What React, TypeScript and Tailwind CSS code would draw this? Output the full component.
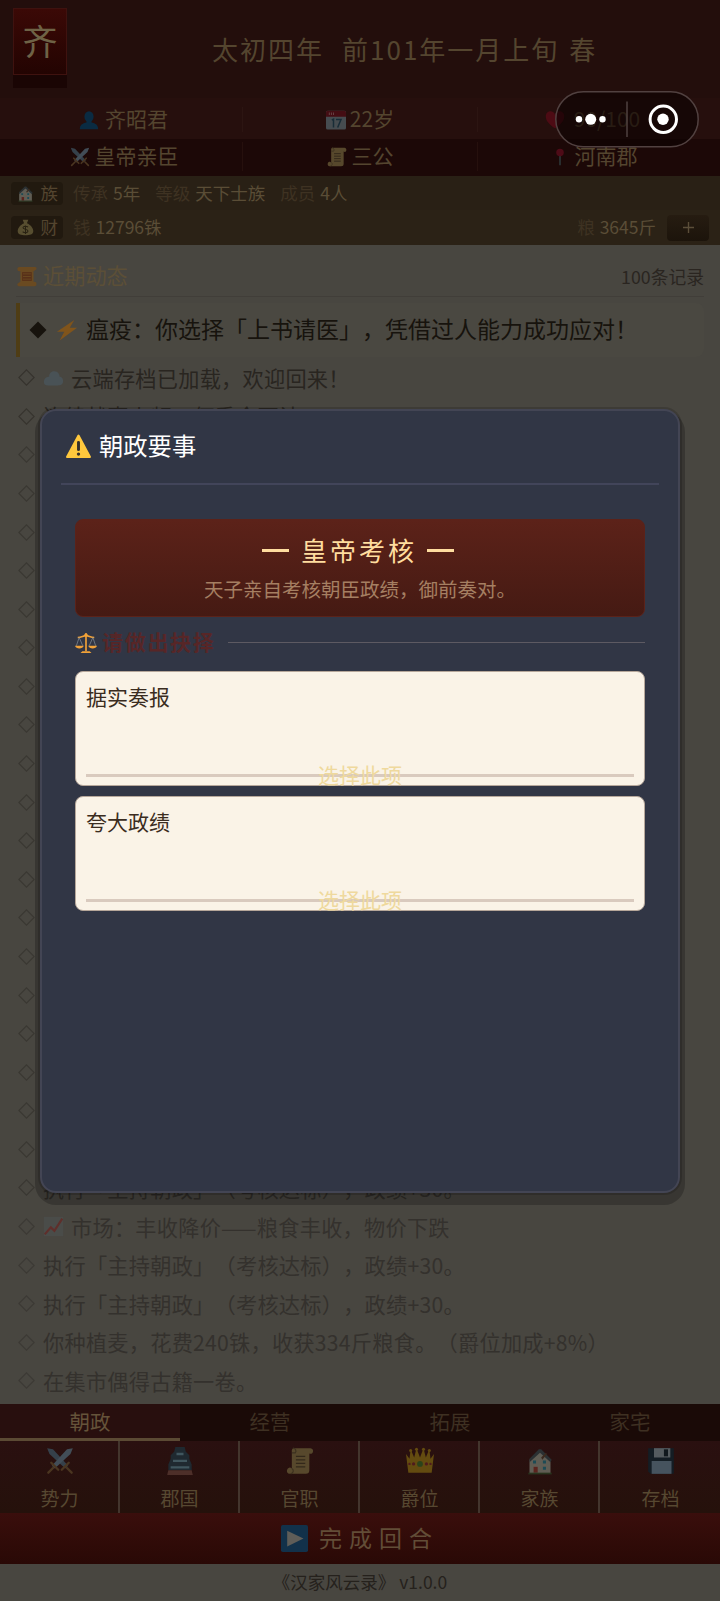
import React from "react";

type IconName =
  | "person" | "calendar" | "heart" | "swords" | "scroll" | "pin" | "house" | "money" | "bolt"
  | "cloud" | "chart" | "warning" | "scales" | "castle" | "crown" | "floppy" | "play" | "oldScroll";

const shapes: Record<IconName, React.ReactNode> = {
  person: (
    <g fill="#0a2b42">
      <ellipse cx="12" cy="8" rx="5.500" ry="6.500" />
      <path d="M1 23c0-5 3-7 8-8v-3h6v3c5 1 8 3 8 8z" />
    </g>
  ),
  calendar: (
    <g>
      <rect x="0" y="1" width="24" height="22.500" rx="2" fill="#464c50" />
      <path d="M0 8V3a2 2 0 0 1 2-2h20a2 2 0 0 1 2 2v5z" fill="#440d13" />
      <path d="M4 3v3M6.500 3v3M9 3v3" stroke="#6b4a4d" strokeWidth="1" />
      <path d="M7 12l2-1v10M12 11.500h6l-4 9.500" fill="none" stroke="#182c37" strokeWidth="1.800" />
    </g>
  ),
  heart: <path d="M12 22C5 17 1 13 1 8a5.500 5.500 0 0 1 11-2 5.500 5.500 0 0 1 11 2c0 5-4 9-11 14z" fill="#4d0b14" />,
  swords: (
    <g>
      <path d="M1 1l5 1 13 14-2.500 2.500L3 6z" fill="#35404a" />
      <path d="M23 1l-5 1L5 16l2.500 2.500L21 6z" fill="#424d57" />
      <path d="M13.500 19.500l6-6M10.500 19.500l-6-6M18 18l4 4M6 18l-4 4" stroke="#4a3520" strokeWidth="2" strokeLinecap="round" />
    </g>
  ),
  scroll: (
    <g>
      <path d="M6 1h15a2.500 2.500 0 0 1 2 3.500 2 2 0 0 1-3 1V20a3 3 0 0 1-3 3H3a2.500 2.500 0 0 1-2-3.500 2.300 2.300 0 0 1 4-1V4a3 3 0 0 1 1-3z" fill="#57482c" />
      <path d="M8.500 8h8M8.500 11h8M8.500 14h8M8.500 17h8" stroke="#33281a" strokeWidth="1.200" />
      <path d="M6 1a2.500 2.500 0 0 1 2 4H5M5 18.500c2 1 1.500 4-1 4.500" stroke="#3d3120" strokeWidth="1" fill="none" />
    </g>
  ),
  oldScroll: (
    <g>
      <path d="M4 1h18a2 2 0 0 1 1 3l-3 2v12h1a2.500 2.500 0 0 1 0 5H3a2 2 0 0 1-1-3l3-2V6H4a2.500 2.500 0 0 1 0-5z" fill="#6a4a21" />
      <path d="M7 7h11v10H7z" fill="#583019" />
      <path d="M8 9h9M8 12h9M8 15h9" stroke="#6a4a21" strokeWidth="1" />
    </g>
  ),
  pin: (
    <g>
      <path d="M12 8v15" stroke="#2b3032" strokeWidth="2.500" />
      <circle cx="12" cy="6" r="5" fill="#4e0b17" />
    </g>
  ),
  house: (
    <g>
      <path d="M3 11l8-8 10 8v12H3z" fill="#605d54" />
      <path d="M3 10L11 2h2l9 9-1 2-9-8-9 8z" fill="#2b3032" />
      <path d="M13 9l4-4 1 1-4 5z" fill="#3c2a1e" />
      <path d="M6.500 17h3.500v5H6.500z" fill="#5b241e" />
      <path d="M6 11.500h2.600v2.600H6zM14.500 11.500h2.600v2.600h-2.600zM14.500 17h2.600v2.600h-2.600z" fill="#1d4b55" />
      <path d="M2 22h20v1.500H2z" fill="#28341e" />
    </g>
  ),
  money: (
    <g>
      <path d="M8 1h8l-2 5c5 2 9 7 9 11 0 5-5 6-11 6S1 22 1 17C1 13 5 8 10 6z" fill="#574e30" />
      <path d="M15.500 11.500c-2-2-7-1.500-7 1s7 1.500 7 4.500-5 3-7.500 1M12 9v12" fill="none" stroke="#282112" strokeWidth="1.500" />
    </g>
  ),
  bolt: <path d="M20 1L1 14h8L4 23.500l19-14h-8z" fill="#80541b" />,
  cloud: <path d="M1 17c0-4 3-6 6-6 0-4 3-7 7-6 3 0 5 3 5 6 3 0 4 3 4 5 0 4-3 5-6 5H6c-3 0-5-1-5-4z" fill="#495256" />,
  chart: (
    <g>
      <rect x="1" y="1" width="22" height="22" fill="#4a4c49" />
      <path d="M2 21l7-8 4 4L22 3" fill="none" stroke="#5f2f2b" strokeWidth="2.500" />
    </g>
  ),
  warning: (
    <g>
      <path d="M12 1.500L23 22H1z" fill="#ffc83d" stroke="#ffc83d" strokeWidth="2" strokeLinejoin="round" />
      <path d="M12 8v7" stroke="#35302a" strokeWidth="2.800" strokeLinecap="round" />
      <circle cx="12" cy="19.300" r="1.600" fill="#35302a" />
    </g>
  ),
  scales: (
    <g fill="none" stroke="#f2a238">
      <path d="M12 2v19M3 6c4 0 6-2 9-2s5 2 9 2" strokeWidth="1.800" />
      <path d="M4.500 6L1.500 15M4.500 6l4 9M19.500 6l-4 9M19.500 6l3 9" strokeWidth=".7" stroke="#8d98a0" />
      <path d="M0 15h9.500c-1 4-8.500 4-9.500 0zM14.500 15H24c-1 4-8.500 4-9.500 0zM8 21h8l2 2H6z" fill="#f2a238" stroke="none" />
      <circle cx="12" cy="3" r="1.300" fill="#f2a238" />
    </g>
  ),
  castle: (
    <g>
      <path d="M8 0h8l1 4 3 3v3l2 5v5H2v-5l2-5V7l3-3z" fill="#1f2930" />
      <path d="M9 5h6v2H9zM6 11h12v1.800H6zM4 16.500h16v2H4z" fill="#40565e" />
      <path d="M2 20h20l1 4H1z" fill="#4d2f29" />
    </g>
  ),
  crown: (
    <g fill="#634b10">
      <path d="M0 6l3 4 1-8 3 7 2-8 3 8 3-8 2 8 3-7 1 8 3-4-2 16H2z" />
      <circle cx="4" cy="3" r="1.300" />
      <circle cx="9" cy="2" r="1.300" />
      <circle cx="15" cy="2" r="1.300" />
      <circle cx="20" cy="3" r="1.300" />
      <circle cx="12" cy="14.500" r="2.500" fill="#2b431a" />
      <circle cx="6.500" cy="14.500" r="1.400" fill="#501a1d" />
      <circle cx="17.500" cy="14.500" r="1.400" fill="#501a1d" />
      <circle cx="3" cy="14.500" r="1" fill="#501a1d" />
      <circle cx="21" cy="14.500" r="1" fill="#501a1d" />
    </g>
  ),
  floppy: (
    <g>
      <path d="M1 1h22v22H3l-2-2z" fill="#141d24" />
      <path d="M6 1h14v8H6z" fill="#555b5f" />
      <path d="M14.500 2h3.500v6h-3.500z" fill="#11181d" />
      <path d="M4 12h17v11H4z" fill="#46535e" />
    </g>
  ),
  play: (
    <g>
      <rect width="24" height="24" rx="1.500" fill="#12314a" />
      <path d="M5.500 5l14.500 7-14.500 7z" fill="#5f5d58" />
    </g>
  ),
};

function Icon({ name, className }: { name: IconName; className: string }) {
  return (
    <svg viewBox="0 0 24 24" className={`shrink-0 ${className}`} aria-hidden="true">
      {shapes[name]}
    </svg>
  );
}

function Stat({ icon, label, className, iconClass = "size-[20px]" }: { icon: IconName; label: string; className: string; iconClass?: string }) {
  return (
    <div className={`flex items-center justify-center text-[21px] ${className}`}>
      <Icon name={icon} className={iconClass} />
      <span className="pb-[2px]">{label}</span>
    </div>
  );
}

function Header() {
  return (
    <header className="h-[245px] shrink-0 text-[#54452f]">
      <div className="flex h-[98px] bg-[#230e0c]">
        <div className="ml-[13px] mt-2 flex h-[67px] w-[54px] items-center justify-center border border-[#3f120f] bg-linear-to-b from-[#3b0906] to-[#230402] pb-[2px] text-[35px] text-[#6e6246] shadow-[0_13px_0_#1a0504]">
          齐
        </div>
        <div className="ml-[145px] flex items-center pb-[2px] text-[26px] tracking-[2px] whitespace-pre">
          太初四年<span className="w-[18px]" />前101年一月上旬<span className="w-[10px]" />春
        </div>
      </div>
      <div className="flex h-[41px] bg-[#260f0d] pt-[9px] pb-[7px]">
        <Stat icon="person" label="齐昭君" className="w-[243px] gap-[6px] border-r border-[#2c1512] pl-[5px]" />
        <Stat icon="calendar" label="22岁" className="w-[235px] gap-[4px] border-r border-[#2c1512]" />
        <Stat icon="heart" label="90/100" className="w-[242px] gap-[9px] pr-[13px]" />
      </div>
      <div className="flex h-[37px] bg-[#1c0807] pt-[3px] pb-[5px]">
        <Stat icon="swords" label="皇帝亲臣" className="w-[243px] gap-[5px] border-r border-[#26100d] pl-[6px]" />
        <Stat icon="scroll" label="三公" className="w-[235px] gap-[5px] border-r border-[#26100d]" />
        <Stat icon="pin" label="河南郡" className="w-[242px] gap-[6px] pr-[10px]" iconClass="size-[18px]" />
      </div>
      <div className="flex h-[34px] items-center bg-[#292015] pl-[11px] text-[17.500px]">
        <Badge icon="house" label="族" />
        <Pair name="传承" value="5年" />
        <Pair name="等级" value="天下士族" />
        <Pair name="成员" value="4人" />
      </div>
      <div className="flex h-[35px] items-center bg-[#2b2216] pr-[11px] pl-[11px] text-[17.500px]">
        <Badge icon="money" label="财" />
        <Pair name="钱" value="12796铢" />
        <span className="flex-1" />
        <Pair name="粮" value="3645斤" />
        <button className="-ml-[4px] flex h-[26px] w-[42px] items-center justify-center rounded bg-linear-to-b from-[#261c11] to-[#1c140b] text-[#5b4e39]">
          <svg viewBox="0 0 12 12" className="size-[11px]"><path d="M6 0v12M0 6h12" stroke="currentColor" strokeWidth="1.500" /></svg>
        </button>
      </div>
    </header>
  );
}

function Badge({ icon, label }: { icon: IconName; label: string }) {
  return (
    <div className="mr-[10px] flex h-[23px] w-[52px] items-center justify-end gap-[7px] rounded bg-[#21190f] pr-[5px]">
      <Icon name={icon} className="size-[17px]" />
      <span>{label}</span>
    </div>
  );
}

function Pair({ name, value }: { name: string; value: string }) {
  return (
    <div className="mr-[15px] flex gap-[5px]">
      <span className="text-[#3e3222]">{name}</span>
      <span className="text-[#5a4d36]">{value}</span>
    </div>
  );
}

type Entry = { text?: string; icon?: IconName; tone: string };

const blanks: Entry[] = Array.from({ length: 19 }, () => ({ tone: "text-[#312e29]" }));

const entries: Entry[] = [
  { text: "云端存档已加载，欢迎回来！", icon: "cloud", tone: "text-[#292520]" },
  { text: "连续战事少频，何季今西计", tone: "text-[#2b2722]" },
  ...blanks,
  { text: "执行「主持朝政」（考核达标），政绩+30。", tone: "text-[#302d29]" },
  { text: "市场：丰收降价——粮食丰收，物价下跌", icon: "chart", tone: "text-[#34312d]" },
  { text: "执行「主持朝政」（考核达标），政绩+30。", tone: "text-[#34312d]" },
  { text: "执行「主持朝政」（考核达标），政绩+30。", tone: "text-[#34312d]" },
  { text: "你种植麦，花费240铢，收获334斤粮食。（爵位加成+8%）", tone: "text-[#34312d]" },
  { text: "在集市偶得古籍一卷。", tone: "text-[#34312d]" },
];

function Log() {
  return (
    <main className="h-[1159px] shrink-0 overflow-hidden px-4 pt-[11px]">
      <div className="flex h-[41px] items-center border-b border-[#413e39]">
        <Icon name="oldScroll" className="mr-[6px] size-[21px]" />
        <span className="pb-[2px] text-[21.200px] text-[#5c4f37]">近期动态</span>
        <span className="ml-auto text-[17.800px] text-[#2a2520]">100条记录</span>
      </div>
      <div className="mt-[6px] flex h-[54px] items-center rounded-r-lg border-l-4 border-[#4f3d15] bg-[#4a4841] pl-[9px] text-[23px] text-[#17130d]">
        <svg viewBox="0 0 18 18" className="mr-[9px] size-[18px]"><path d="M9 .5L17.500 9 9 17.500.5 9z" fill="currentColor" /></svg>
        <Icon name="bolt" className="mr-[8px] size-[22px]" />
        <span className="pb-[3px] whitespace-nowrap">瘟疫：你选择「上书请医」，凭借过人能力成功应对！</span>
      </div>
      <ul className="mt-[1.500px]">
        {entries.map((e, i) => (
          <li key={i} className={`flex h-[38.580px] items-center pl-[2px] text-[21.200px] tracking-[0.250px] whitespace-nowrap ${e.tone}`}>
            <svg viewBox="0 0 16 16" className="mr-[8px] size-[17px] shrink-0 opacity-60"><path d="M8 .8L15.200 8 8 15.200.8 8z" fill="none" stroke="currentColor" strokeWidth="1" /></svg>
            {e.icon && <Icon name={e.icon} className="mr-[7px] size-[21px]" />}
            <span>{e.text}</span>
          </li>
        ))}
      </ul>
    </main>
  );
}

const actions: { icon: IconName; label: string }[] = [
  { icon: "swords", label: "势力" },
  { icon: "castle", label: "郡国" },
  { icon: "scroll", label: "官职" },
  { icon: "crown", label: "爵位" },
  { icon: "house", label: "家族" },
  { icon: "floppy", label: "存档" },
];

function Bottom() {
  return (
    <footer className="shrink-0">
      <nav className="grid h-[37px] grid-cols-4 bg-[#1a0a07] text-center text-[20.500px] leading-[34px] text-[#3e3022]">
        <span className="border-b-[3px] border-[#5b4a34] bg-[#280f0e] text-[#65533a]">朝政</span>
        <span>经营</span>
        <span>拓展</span>
        <span>家宅</span>
      </nav>
      <div className="grid h-[72px] grid-cols-6 bg-linear-to-b from-[#2a1010] to-[#25110b]">
        {actions.map((a) => (
          <div key={a.label} className="flex flex-col items-center border-r-2 border-[#43352d] pt-[6px] pl-px text-[19px] leading-[22px] text-[#574831] last:border-r-0">
            <Icon name={a.icon} className="mb-[12px] size-[28px]" />
            <span>{a.label}</span>
          </div>
        ))}
      </div>
      <div className="flex h-[51px] items-center justify-center gap-[11px] bg-linear-to-b from-[#3a0e0c] to-[#290906] text-[23px] tracking-[7px] text-[#624d37]">
        <Icon name="play" className="size-[27px]" />
        <span className="pb-[3px]">完成回合</span>
      </div>
      <div className="flex h-[37px] items-center justify-center text-[17.500px] whitespace-pre text-[#25211c]">
        《汉家风云录》 v1.0.0
      </div>
    </footer>
  );
}

function Option({ label }: { label: string }) {
  return (
    <div className="flex h-[115.500px] flex-col justify-between rounded-lg border border-[#b6a79a] bg-[#faf3e7] px-[10px] pt-[10px] text-[21px] leading-[28px]">
      <span className="text-[#3a2c20]">{label}</span>
      <div className="grid h-[20px] items-center">
        <span className="col-start-1 row-start-1 h-[3px] bg-[#d9cabe]" />
        <span className="col-start-1 row-start-1 -mt-[3px] text-center leading-[20px] text-[#efd99d]">选择此项</span>
      </div>
    </div>
  );
}

function Dialog() {
  return (
    <div className="absolute inset-0 flex items-center justify-center">
      <section className="h-[784px] w-[640px] rounded-[16px] border-2 border-[#434554] bg-[#313645] px-[19px] shadow-[0_0_0_2px_rgba(0,0,0,0.15),0_7px_0_5px_rgba(0,0,0,0.22)]">
        <div className="flex h-[74px] items-center gap-[8px] border-b-2 border-[#42455a] px-[5px] text-[24.300px] text-white">
          <Icon name="warning" className="size-[25px]" />
          <span className="pb-[2px]">朝政要事</span>
        </div>
        <div className="px-[14px] pt-[34px]">
          <div className="flex h-[98px] flex-col items-center rounded-lg border border-[#5b2219] bg-linear-to-b from-[#5c2219] to-[#451a13] pt-[14px] text-[#ffdd9f]">
            <div className="-ml-[4px] flex items-center gap-[12px] text-[26px] leading-[36px]">
              <span className="h-[3px] w-[27px] bg-current" />
              <span className="-mt-[2px] tracking-[3px]">皇帝考核</span>
              <span className="-ml-[2px] h-[3px] w-[27px] bg-current" />
            </div>
            <p className="mt-[9px] text-[19.500px] leading-[24px] text-[#a57f62]">天子亲自考核朝臣政绩，御前奏对。</p>
          </div>
          <div className="flex h-[54px] items-center pb-[2px] text-[21px] font-bold tracking-[1.700px] text-[#572627]">
            <Icon name="scales" className="mr-[5px] size-[22px]" />
            <span className="pb-px">请做出抉择</span>
            <span className="ml-[12px] h-px flex-1 bg-[#5d5a62]" />
          </div>
          <div className="flex flex-col gap-[9.500px]">
            <Option label="据实奏报" />
            <Option label="夸大政绩" />
          </div>
        </div>
      </section>
    </div>
  );
}

function Capsule() {
  return (
    <svg viewBox="0 0 144 57" className="absolute top-[91px] left-[555px] h-[57px] w-[144px]">
      <rect x=".8" y=".8" width="142.400" height="54.900" rx="27.400" fill="#0b0202" fillOpacity=".6" stroke="#514140" strokeWidth="1.500" />
      <path d="M72 10.500v35.500" stroke="#4f4241" strokeWidth="1.500" />
      <g fill="#fff">
        <circle cx="24" cy="28.300" r="3.200" />
        <circle cx="35.700" cy="28.300" r="5.500" />
        <circle cx="47.500" cy="28.300" r="3.200" />
        <circle cx="108" cy="28.300" r="5.700" />
      </g>
      <circle cx="108.300" cy="28.300" r="13.200" fill="none" stroke="#fff" strokeWidth="3" />
    </svg>
  );
}

export default function App() {
  return (
    <div className="relative flex h-[1601px] w-[720px] flex-col overflow-hidden bg-[#484640] font-['Noto_Sans_CJK_SC',sans-serif] [text-spacing-trim:space-all]">
      <Header />
      <Log />
      <Bottom />
      <Dialog />
      <Capsule />
    </div>
  );
}
